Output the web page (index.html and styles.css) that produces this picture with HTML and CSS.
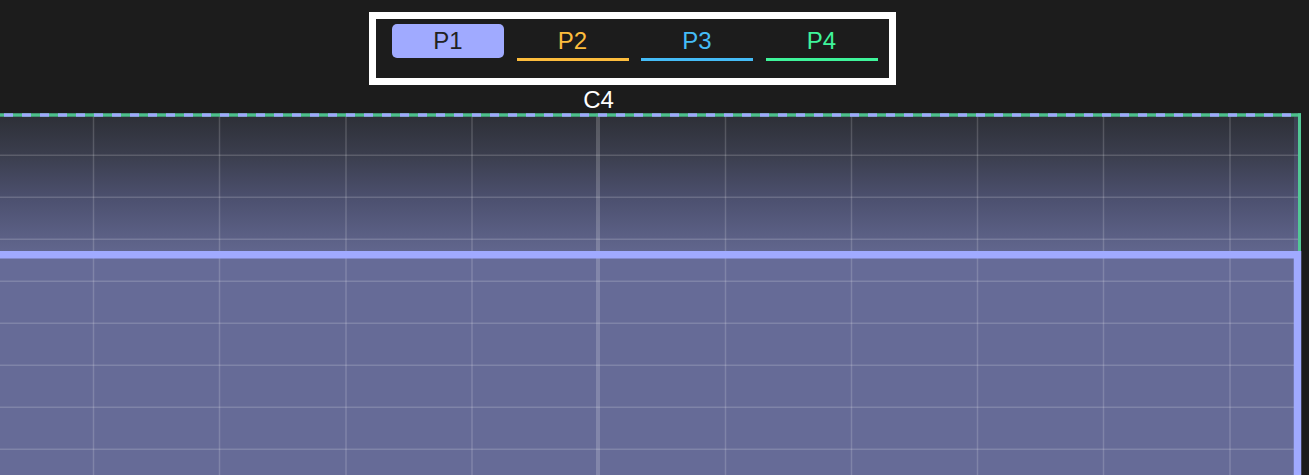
FILE: index.html
```html
<!DOCTYPE html>
<html>
<head>
<meta charset="utf-8">
<link rel="stylesheet" href="styles.css">
</head>
<body>
<div class="top">
  <div class="legend">
    <div class="tab tab-p1">P1</div>
    <div class="tab tab-p2">P2</div>
    <div class="tab tab-p3">P3</div>
    <div class="tab tab-p4">P4</div>
  </div>
  <div class="axis-label">C4</div>
</div>
<div class="chart">
  <svg class="chart-svg" width="1309" height="362" viewBox="0 0 1309 362" xmlns="http://www.w3.org/2000/svg">
    <defs>
      <linearGradient id="fade" x1="0" y1="0" x2="0" y2="141" gradientUnits="userSpaceOnUse">
        <stop offset="0" stop-color="#2c2e35"/>
        <stop offset="0.3" stop-color="#3b3e4e"/>
        <stop offset="0.62" stop-color="#4d5170"/>
        <stop offset="1" stop-color="#62678f"/>
      </linearGradient>
      <pattern id="dash" x="4" y="0" width="18" height="4" patternUnits="userSpaceOnUse">
        <rect x="0" y="0" width="9" height="4" fill="#9fa8fc"/>
      </pattern>
    </defs>
    <rect x="0" y="0" width="1299.5" height="362" fill="url(#fade)"/>
    <rect x="0" y="141.75" width="1297.5" height="221" fill="#666b97"/>
    <rect x="1294" y="0" width="4" height="142" fill="rgba(160,170,255,0.12)"/>
    <g stroke="rgba(255,255,255,0.17)" stroke-width="1.5">
      <line x1="93.5" y1="0" x2="93.5" y2="362"/>
      <line x1="219.5" y1="0" x2="219.5" y2="362"/>
      <line x1="346" y1="0" x2="346" y2="362"/>
      <line x1="472" y1="0" x2="472" y2="362"/>
      <line x1="725.5" y1="0" x2="725.5" y2="362"/>
      <line x1="851.5" y1="0" x2="851.5" y2="362"/>
      <line x1="977.5" y1="0" x2="977.5" y2="362"/>
      <line x1="1103.5" y1="0" x2="1103.5" y2="362"/>
      <line x1="1230" y1="0" x2="1230" y2="362"/>
      <line x1="0" y1="42.3" x2="1298" y2="42.3"/>
      <line x1="0" y1="84.3" x2="1298" y2="84.3"/>
      <line x1="0" y1="126.3" x2="1298" y2="126.3"/>
      <line x1="0" y1="168.3" x2="1298" y2="168.3"/>
      <line x1="0" y1="210.3" x2="1298" y2="210.3"/>
      <line x1="0" y1="252.3" x2="1298" y2="252.3"/>
      <line x1="0" y1="294.3" x2="1298" y2="294.3"/>
      <line x1="0" y1="336.3" x2="1298" y2="336.3"/>
    </g>
    <line x1="598" y1="0" x2="598" y2="362" stroke="rgba(255,255,255,0.19)" stroke-width="4"/>
    <rect x="0" y="0.3" width="1301" height="3.4" fill="#4cbf8a"/>
    <rect x="0" y="0.3" width="1298" height="3.4" fill="url(#dash)"/>
    <rect x="1298" y="0.3" width="3" height="362" fill="#52c895"/>
    <path d="M0 141.75 H1297.5 V362" fill="none" stroke="#a0aaff" stroke-width="7.5"/>
  </svg>
</div>
</body>
</html>
```
FILE: styles.css
```css
html, body {
  margin: 0;
  padding: 0;
  background: #1c1c1c;
  overflow: hidden;
}
body {
  width: 1309px;
  height: 475px;
  font-family: "Liberation Sans", Arial, sans-serif;
}
.top {
  height: 113px;
  display: flex;
  flex-direction: column;
  align-items: flex-start;
}
.legend {
  margin-top: 12px;
  margin-left: 369px;
  width: 527px;
  height: 73px;
  box-sizing: border-box;
  border: 7px solid #ffffff;
  padding: 5px 10px 0 16px;
  display: flex;
  gap: 12.5px;
  align-items: flex-start;
}
.tab {
  width: 112px;
  height: 37px;
  box-sizing: border-box;
  font-size: 24px;
  line-height: 34px;
  text-align: center;
  border-bottom: 3px solid transparent;
}
.tab-p1 {
  background: #a0aaff;
  color: #222222;
  border-radius: 5px;
  height: 34px;
  border-bottom: 0;
}
.tab-p2 {
  color: #fdbd3d;
  border-bottom-color: #fdbd3d;
}
.tab-p3 {
  color: #45bcf7;
  border-bottom-color: #45bcf7;
}
.tab-p4 {
  color: #3ff59b;
  border-bottom-color: #3ff59b;
}
.axis-label {
  margin-top: 2.5px;
  margin-left: 568.5px;
  width: 60px;
  text-align: center;
  color: #ffffff;
  font-size: 24px;
  line-height: 24px;
}
.chart {
  height: 362px;
  overflow: hidden;
}
.chart-svg {
  display: block;
}
```
